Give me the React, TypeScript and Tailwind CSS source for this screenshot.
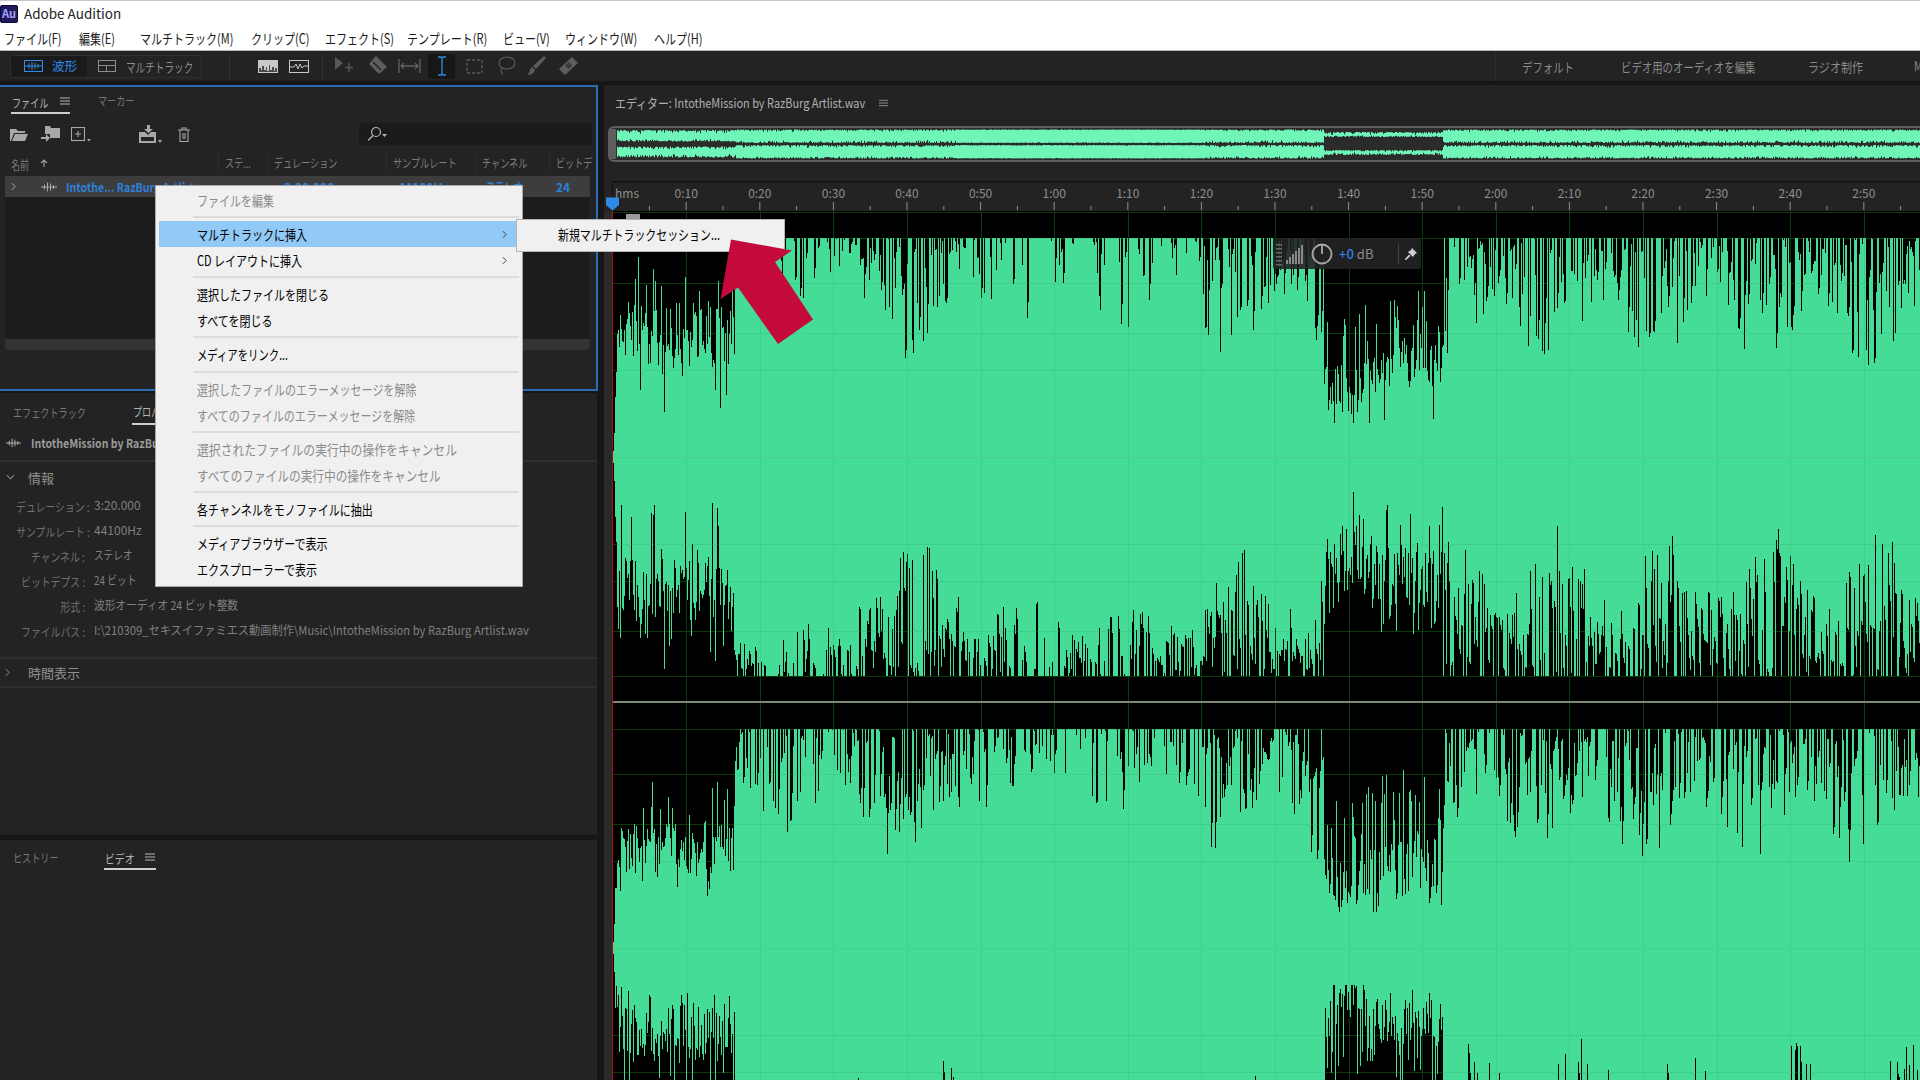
import type { ReactNode } from 'react';

// text in the reference is squeezed horizontally, so labels are narrowed with scale-x
const MENU_RAW = 'inline-block origin-left whitespace-nowrap leading-none text-[14px]';
const MENU_TEXT = `${MENU_RAW} scale-x-[.786]`;
const PANEL_RAW = 'inline-block origin-left whitespace-nowrap leading-none text-[12px]';
const PANEL_TEXT = `${PANEL_RAW} scale-x-[.76]`;
const BAR_RAW = 'inline-block origin-left whitespace-nowrap leading-none text-[13px]';
const BAR_TEXT = `${BAR_RAW} scale-x-[.8]`;

const CLIP = 219;
const CH1 = 457;
const CH2 = 948;
const SECOND = 7.36;
const ORIGIN = 612.6;

function rng(seed: number) {
  return () => {
    seed |= 0;
    seed = (seed + 0x6d2b79f5) | 0;
    let t = Math.imul(seed ^ (seed >>> 15), 1 | seed);
    t = (t + Math.imul(t ^ (t >>> 7), 61 | t)) ^ t;
    return ((t ^ (t >>> 14)) >>> 0) / 4294967296;
  };
}

// [from, to, spike density, spike depth]
type Seg = [number, number, number, number];
const EDGES: { seed: number; loud: Seg[]; a: number[]; q: number[] }[] = [
  {
    seed: 11,
    loud: [[735, 858, 0.2, 60], [858, 955, 0.55, 115], [955, 1205, 0.2, 85], [1205, 1324, 0.55, 112], [1443, 1921, 0.5, 125]],
    a: [17, 65, 130, 178],
    q: [50, 105, 150, 185],
  },
  {
    seed: 23,
    loud: [[735, 858, 0.4, 50], [858, 960, 0.7, 130], [960, 1205, 0.45, 78], [1205, 1324, 0.75, 125], [1443, 1921, 0.68, 145]],
    a: [6, 55, 122, 180],
    q: [38, 70, 130, 184],
  },
  {
    seed: 37,
    loud: [[735, 858, 0.42, 100], [858, 960, 0.65, 132], [960, 1205, 0.34, 84], [1205, 1324, 0.65, 125], [1443, 1921, 0.55, 130]],
    a: [38, 94, 144, 174],
    q: [40, 110, 160, 183],
  },
  {
    seed: 53,
    loud: [[735, 858, 0.2, 72], [858, 960, 0.6, 112], [960, 1205, 0.2, 72], [1205, 1324, 0.55, 112], [1443, 1921, 0.45, 125]],
    a: [60, 110, 170, 182],
    q: [60, 120, 170, 182],
  },
];

function edgeDepths(edge: (typeof EDGES)[number]) {
  const r = rng(edge.seed);
  const out: number[] = [];
  let carry = 0;
  for (let x = 613; x < 1920; x++) {
    const inA = x < 735;
    const inQ = x >= 1324 && x < 1443;
    if (inA || inQ) {
      const [tip, lo, hi, black] = inA ? edge.a : edge.q;
      const p = r();
      let d = lo + r() * (hi - lo);
      if (p < (inQ ? 0.2 : 0.12)) d = tip + r() * (lo - tip);
      else if (p > 0.93) d = hi + r() * (black - hi);
      if (inQ) d += 28 * Math.exp(-(((x - 1349) / 22) ** 2));
      out.push(Math.min(d, black));
      continue;
    }
    const seg = edge.loud.find((s) => x >= s[0] && x < s[1]);
    if (!seg) {
      out.push(0);
      continue;
    }
    const swell = 0.75 + 0.25 * Math.sin(x / 17 + edge.seed);
    if (carry > 0 && r() < 0.3) {
      out.push(carry * (0.7 + r() * 0.3));
      carry = 0;
    } else if (r() < seg[2]) {
      const d = 6 + Math.pow(r(), 1.1) * seg[3] * swell;
      out.push(d);
      carry = d;
    } else {
      out.push(r() < 0.08 ? r() * 5 : 0);
      carry = 0;
    }
  }
  return out;
}

function channelPath(center: number, topEdge: number, bottomEdge: number) {
  const top = edgeDepths(EDGES[topEdge]);
  const bottom = edgeDepths(EDGES[bottomEdge]);
  let d = '';
  top.forEach((t, i) => {
    const x = 613 + i;
    // the file fades in from nothing on its first pixels
    const fade = i < 4 ? [6, 24, 60, 85][i] : CLIP;
    const y1 = Math.round(Math.max(center - CLIP + t, center - fade));
    const y2 = Math.round(Math.min(center + CLIP - bottom[i], center + fade));
    d += `M${x + 0.5} ${y1}V${y2}`;
  });
  return d;
}

function overviewPath() {
  const r = rng(71);
  let d = '';
  for (let x = 617; x < 1920; x++) {
    const a = x < 736;
    const q = x >= 1324 && x < 1443;
    const n = () => r() * r();
    if (a) {
      d += `M${x + 0.5} ${(130 + n() * 4).toFixed(1)}V${(141.5 - n() * 3).toFixed(1)}`;
      d += `M${x + 0.5} ${(146.5 + n() * 3).toFixed(1)}V${(157.5 - n() * 4).toFixed(1)}`;
    } else if (q) {
      d += `M${x + 0.5} ${(132 + n() * 3).toFixed(1)}V${(137 - n() * 2).toFixed(1)}`;
      d += `M${x + 0.5} ${(150 + n() * 2).toFixed(1)}V${(155 - n() * 3).toFixed(1)}`;
    } else {
      const dense = x < 1205 && x > 955 ? 0.3 : 1;
      d += `M${x + 0.5} ${(129.5 + n() * 2.5 * dense).toFixed(1)}V${(143 - r() * r() * 3 * dense).toFixed(1)}`;
      d += `M${x + 0.5} ${(145 + r() * r() * 3 * dense).toFixed(1)}V${(158.5 - n() * 2.5 * dense).toFixed(1)}`;
    }
  }
  return d;
}

const WAVE1 = channelPath(CH1, 0, 1);
const WAVE2 = channelPath(CH2, 2, 3);
const OVERVIEW = overviewPath();
const MAJOR = Array.from({ length: 17 }, (_, i) => i + 1);
const GRID_Y = [CH1, CH2].flatMap((c) => [c - 219, c - 174, c - 124, c - 87, c, c + 87, c + 124, c + 174, c + 219]);

function fmt(n: number) {
  const s = n * 10;
  return `${Math.floor(s / 60)}:${String(s % 60).padStart(2, '0')}`;
}

function WaveGlyph({ className }: { className: string }) {
  return (
    <svg viewBox="0 0 16 10" className={className} fill="none" stroke="currentColor" strokeWidth="1">
      <path d="M0 5H16M3.5 2.5V7.5M6.5 0.5V9.5M9.5 1.5V8.5M12.5 3V7" />
    </svg>
  );
}

function Hamburger({ className }: { className: string }) {
  return (
    <svg viewBox="0 0 10 8" className={className} fill="none" stroke="currentColor" strokeWidth="1">
      <path d="M0 1H10M0 4H10M0 7H10" />
    </svg>
  );
}

function Sep({ tall }: { tall?: boolean }) {
  return (
    <div className={`${tall ? 'h-[9px]' : 'h-[8px]'} flex items-center ml-[37px] mr-[3px]`}>
      <div className="h-[2px] w-full bg-[#dcdcdc]" />
    </div>
  );
}

function Item({ label, off, sub, hot, text = MENU_TEXT }: { label: string; off?: boolean; sub?: boolean; hot?: boolean; text?: string }) {
  return (
    <div className={`h-[26px] flex items-center ml-[3px] mr-[6px] pl-[38px] ${hot ? 'bg-[#91c9f7]' : ''}`}>
      <span className={`${text} ${off ? 'text-[#8b8b8b]' : 'text-black'}`}>{label}</span>
      {sub && (
        <svg viewBox="0 0 6 10" className="w-[5px] h-[9px] ml-auto mr-[9px] text-[#444]" fill="none" stroke="currentColor" strokeWidth="1.2">
          <path d="M1 1L5 5L1 9" />
        </svg>
      )}
    </div>
  );
}

function ContextMenu() {
  return (
    <div className="absolute left-[155px] top-[185px] w-[368px] h-[402px] bg-[#f0f0f0] border border-[#a8a8a8] pt-[1px]">
      <Item label="ファイルを編集" off />
      <Sep />
      <Item label="マルチトラックに挿入" sub hot />
      <Item label="CD レイアウトに挿入" sub />
      <Sep />
      <Item label="選択したファイルを閉じる" />
      <Item label="すべてを閉じる" />
      <Sep />
      <Item label="メディアをリンク..." text={`${MENU_RAW} scale-x-[.74]`} />
      <Sep tall />
      <Item label="選択したファイルのエラーメッセージを解除" off />
      <Item label="すべてのファイルのエラーメッセージを解除" off />
      <Sep />
      <Item label="選択されたファイルの実行中の操作をキャンセル" off text={`${MENU_RAW} scale-x-[.844]`} />
      <Item label="すべてのファイルの実行中の操作をキャンセル" off text={`${MENU_RAW} scale-x-[.833]`} />
      <Sep />
      <Item label="各チャンネルをモノファイルに抽出" />
      <Sep />
      <Item label="メディアブラウザーで表示" />
      <Item label="エクスプローラーで表示" />
    </div>
  );
}

function TitleBar() {
  return (
    <div className="h-[26px] shrink-0 bg-white border-t border-[#c8c8c8] flex items-center">
      <div className="w-[18px] h-[18px] bg-[#1f1a5c] border border-[#0c0a33] rounded-[2px] flex items-center justify-center text-[11px] font-bold leading-none text-[#a7a4ff]">
        Au
      </div>
      <span className="ml-[6px] text-[13.5px] leading-none text-[#222]">Adobe Audition</span>
    </div>
  );
}

const MENUS: [string, string][] = [
  ['ファイル(F)', 'w-[75px]'],
  ['編集(E)', 'w-[61px]'],
  ['マルチトラック(M)', 'w-[111px]'],
  ['クリップ(C)', 'w-[74px]'],
  ['エフェクト(S)', 'w-[82px]'],
  ['テンプレート(R)', 'w-[96px]'],
  ['ビュー(V)', 'w-[62px]'],
  ['ウィンドウ(W)', 'w-[89px]'],
  ['ヘルプ(H)', 'w-[60px]'],
];

function MenuBar() {
  return (
    <div className="h-[25px] shrink-0 bg-white border-b border-[#b8b8b8] flex items-center pl-[4px] pb-[2px]">
      {MENUS.map(([label, w]) => (
        <div key={label} className={w}>
          <span className={`${MENU_TEXT} text-[#1a1a1a]`}>{label}</span>
        </div>
      ))}
    </div>
  );
}

function Toolbar() {
  return (
    <div className="h-[30px] shrink-0 overflow-hidden bg-[#232323] flex items-center pl-[10px] text-[#b5b5b5] [&>*]:shrink-0">
      <div className="w-[192px] h-[23px] flex rounded-[3px] border border-[#2f2f2f]">
        <div className="w-[76px] shrink-0 bg-[#1a1a1a] flex items-center pl-[13px] text-[#2f8ae8]">
          <svg viewBox="0 0 19 12" className="w-[19px] h-[12px]" fill="none" stroke="currentColor" strokeWidth="1">
            <rect x="0.5" y="0.5" width="18" height="11" />
            <path d="M1 6H18M5 3.5V8.5M8 2V10M11 3V9M14 4V8" />
          </svg>
          <span className="ml-[9px] text-[12.5px] leading-none whitespace-nowrap">波形</span>
        </div>
        <div className="flex-1 min-w-0 flex items-center pl-[11px] text-[#8c8c8c]">
          <svg viewBox="0 0 18 12" className="w-[18px] h-[12px] shrink-0" fill="#8c8c8c">
            <path d="M0 0H18V12H0ZM1 1V5H17V1ZM1 6V11H8V6ZM9 6V11H17V6Z" fillRule="evenodd" />
          </svg>
          <span className={`ml-[10px] ${BAR_RAW} scale-x-[.74]`}>マルチトラック</span>
        </div>
      </div>
      <div className="ml-[27px] w-px h-[26px] bg-[#333]" />
      <svg viewBox="0 0 20 13" className="ml-[28px] w-[20px] h-[13px]">
        <rect width="20" height="13" fill="#c8c8c8" />
        <path d="M1 12V8H3V10H4V6H6V10H8V7H9V11H11V5H12V10H14V7H16V11H17V8H19V12Z" fill="#4a4a4a" />
      </svg>
      <svg viewBox="0 0 20 13" className="ml-[11px] w-[20px] h-[13px]" fill="none" stroke="#c8c8c8" strokeWidth="1">
        <rect x="0.5" y="0.5" width="19" height="12" />
        <path d="M1 7H5L7 4L9 9L11 4L13 8L15 6H19" />
      </svg>
      <div className="ml-[13px] w-px h-[26px] bg-[#333]" />
      <svg viewBox="0 0 20 18" className="ml-[12px] w-[20px] h-[18px]" fill="#585858">
        <path d="M0 0L8 6L0 13Z" />
        <path d="M14 6V15M10 10.5H18" stroke="#585858" strokeWidth="1.4" />
      </svg>
      <svg viewBox="0 0 21 20" className="ml-[13px] w-[21px] h-[20px]">
        <path d="M8 0L19 11L11 18L1 8Z" fill="#5e5e5e" />
        <path d="M5 6L13 14" stroke="#232323" strokeWidth="1.5" />
      </svg>
      <svg viewBox="0 0 23 14" className="ml-[9px] w-[23px] h-[14px]" fill="none" stroke="#626262" strokeWidth="1.3">
        <path d="M1 0V14M22 0V14M3 7H20M6 4L3 7L6 10M17 4L20 7L17 10" />
      </svg>
      <div className="ml-[7px] w-[27px] h-[25px] bg-[#171717] rounded-[2px] flex items-center justify-center">
        <svg viewBox="0 0 10 20" className="w-[10px] h-[20px]" fill="none" stroke="#2f8ae8" strokeWidth="1.3">
          <path d="M1 1H4L5 2L6 1H9M5 2V18M1 19H4L5 18L6 19H9" />
        </svg>
      </div>
      <svg viewBox="0 0 17 15" className="ml-[11px] w-[17px] h-[15px]" fill="none" stroke="#5a5a5a" strokeWidth="1.3" strokeDasharray="3 2">
        <rect x="1" y="1" width="15" height="13" />
      </svg>
      <svg viewBox="0 0 20 20" className="ml-[13px] w-[20px] h-[20px]" fill="none" stroke="#5a5a5a" strokeWidth="1.2">
        <ellipse cx="11" cy="7" rx="8" ry="6" />
        <path d="M6 12C4 14 5 16 7 19" />
      </svg>
      <svg viewBox="0 0 19 20" className="ml-[11px] w-[19px] h-[20px]" fill="#5c5c5c">
        <path d="M17 0L19 2L9 13L6 10Z" />
        <path d="M5 11L8 14C7 18 3 19 0 19C3 17 2 13 5 11Z" />
      </svg>
      <svg viewBox="0 0 21 20" className="ml-[12px] w-[21px] h-[20px]">
        <path d="M14 1L20 7L7 19L1 13Z" fill="#5e5e5e" />
        <rect x="8" y="7" width="5" height="5" transform="rotate(-45 10.5 9.5)" fill="#3a3a3a" />
      </svg>
      <div className="ml-[916px] border-l border-[#2e2e2e] h-full flex items-center pl-[26px] pb-[2px] text-[#8a8a8a]">
        <div className="w-[99px]"><span className={BAR_TEXT}>デフォルト</span></div>
        <div className="w-[187px]"><span className={BAR_TEXT}>ビデオ用のオーディオを編集</span></div>
        <div className="w-[106px]"><span className={`${BAR_RAW} scale-x-[.85]`}>ラジオ制作</span></div>
        <span className={BAR_TEXT}>M</span>
      </div>
    </div>
  );
}

function Col({ className, children, first }: { className: string; children?: ReactNode; first?: boolean }) {
  return (
    <div className={`${className} h-full flex items-center ${first ? '' : 'border-l border-[#2c2c2c] pl-[6px]'}`}>{children}</div>
  );
}

function FilesPanel() {
  return (
    <div className="h-[306px] shrink-0 bg-[#232323] border-y-2 border-r-2 border-[#2a6db5] flex flex-col">
      <div className="h-[27px] shrink-0 flex items-end pl-[11px]">
        <div className="w-[59px] h-[27px] flex items-center border-b-2 border-[#cfcfcf] pl-[1px] pt-[3px] text-[#b5b5b5]">
          <div className="w-[48px]"><span className={PANEL_TEXT}>ファイル</span></div>
          <Hamburger className="w-[10px] h-[8px]" />
        </div>
        <div className="ml-[28px] h-[27px] flex items-center pt-[1px] text-[#777]">
          <span className={PANEL_TEXT}>マーカー</span>
        </div>
      </div>
      <div className="h-[34px] mt-[3px] shrink-0 flex items-center pl-[10px] text-[#a8a8a8]">
        <svg viewBox="0 0 18 13" className="w-[18px] h-[13px]" fill="currentColor">
          <path d="M0 1H6L8 3H15V5H4L1 13H0ZM5 6H18L15 13H2Z" />
        </svg>
        <svg viewBox="0 0 19 16" className="ml-[13px] w-[19px] h-[16px]" fill="currentColor">
          <path d="M4 0H9L10 2H19V12H9V8H4Z" />
          <path d="M0 11H5V8L9 12L5 16V13H0Z" />
        </svg>
        <svg viewBox="0 0 21 15" className="ml-[11px] w-[21px] h-[15px]" fill="none" stroke="currentColor" strokeWidth="1.1">
          <rect x="0.5" y="0.5" width="13" height="13" />
          <path d="M7 4V10M4 7H10" />
          <path d="M16 12H20L18 14.5Z" fill="currentColor" stroke="none" />
        </svg>
        <svg viewBox="0 0 23 19" className="ml-[47px] w-[23px] h-[19px]" fill="currentColor">
          <path d="M8 0H11V4H14L9.5 8L5 4H8Z" />
          <path d="M0 7H6L9 10L12 7H17V18H0ZM2 12V16H15V12Z" fillRule="evenodd" />
          <path d="M19 15H23L21 18Z" />
        </svg>
        <svg viewBox="0 0 12 15" className="ml-[16px] w-[12px] h-[15px]" fill="none" stroke="currentColor" strokeWidth="1.1">
          <path d="M0 3H12M4 3V1H8V3M2 3V14.5H10V3M5 6V12M7 6V12" />
        </svg>
        <div className="ml-[169px] w-[233px] h-[22px] bg-[#1b1b1b] rounded-[3px] flex items-center pl-[8px]">
          <svg viewBox="0 0 21 16" className="w-[21px] h-[16px]" fill="none" stroke="#b5b5b5" strokeWidth="1.2">
            <circle cx="9" cy="6" r="4.5" />
            <path d="M6 9.5L1 14.5" />
            <path d="M15 8H20L17.5 11Z" fill="#b5b5b5" stroke="none" />
          </svg>
        </div>
      </div>
      <div className="h-[21px] mt-[1px] shrink-0 flex ml-[5px] text-[#7c7c7c]">
        <Col className="w-[213px] pl-[6px]" first>
          <div className="w-[29px]"><span className={PANEL_TEXT}>名前</span></div>
          <svg viewBox="0 0 8 8" className="w-[8px] h-[8px]" fill="none" stroke="#999" strokeWidth="1.2"><path d="M4 8V1M1 4L4 1L7 4" /></svg>
        </Col>
        <Col className="w-[49px]"><span className={PANEL_TEXT}>ステ...</span></Col>
        <Col className="w-[119px]"><span className={PANEL_TEXT}>デュレーション</span></Col>
        <Col className="w-[89px]"><span className={PANEL_TEXT}>サンプルレート</span></Col>
        <Col className="w-[74px]"><span className={PANEL_TEXT}>チャンネル</span></Col>
        <Col className="w-[41px]"><span className={PANEL_TEXT}>ビットデ</span></Col>
      </div>
      <div className="mt-[3px] mx-[5px] w-[585px] h-[174px] shrink-0 bg-[#1c1c1c] rounded-b-[4px] flex flex-col">
        <div className="h-[21px] bg-[#3d3d3d] flex text-[#2f80d8] font-bold">
          <div className="w-[213px] flex items-center pl-[6px]">
            <svg viewBox="0 0 6 10" className="w-[5px] h-[9px] text-[#aaa]" fill="none" stroke="currentColor" strokeWidth="1.2"><path d="M1 1L5 5L1 9" /></svg>
            <WaveGlyph className="ml-[25px] w-[16px] h-[10px] text-[#aaa]" />
            <span className={`ml-[9px] ${PANEL_RAW} scale-x-[.88]`}>Intothe... RazBurg Artlist</span>
          </div>
          <div className="w-[49px]" />
          <div className="w-[119px] pl-[17px] flex items-center"><span className={PANEL_RAW}>3:20.000</span></div>
          <div className="w-[89px] pl-[12px] flex items-center"><span className={PANEL_RAW}>44100Hz</span></div>
          <div className="w-[74px] pl-[11px] flex items-center"><span className={PANEL_TEXT}>ステレオ</span></div>
          <div className="pl-[7px] flex items-center"><span className={PANEL_RAW}>24</span></div>
        </div>
        <div className="mt-auto h-[11px] bg-[#333] rounded-b-[4px]" />
      </div>
    </div>
  );
}

const INFO: [string, string, string][] = [
  ['デュレーション :', '3:20.000', 'scale-x-[1]'],
  ['サンプルレート :', '44100Hz', 'scale-x-[1]'],
  ['チャンネル :', 'ステレオ', 'scale-x-[.8]'],
  ['ビットデプス :', '24 ビット', 'scale-x-[.82]'],
  ['形式 :', '波形オーディオ 24 ビット整数', 'scale-x-[.89]'],
  ['ファイルパス :', 'I:\\210309_セキスイファミエス動画制作\\Music\\IntotheMission by RazBurg Artlist.wav', 'scale-x-[.935]'],
];

function PropsPanel() {
  return (
    <div className="h-[442px] shrink-0 mt-[2px] bg-[#232323] flex flex-col w-[597px]">
      <div className="h-[32px] shrink-0 flex pl-[13px]">
        <div className="w-[119px] flex items-center pt-[7px] text-[#777]"><span className={PANEL_TEXT}>エフェクトラック</span></div>
        <div className="w-[60px] flex items-center pt-[7px] pl-[1px] border-b-2 border-[#cfcfcf] text-[#b5b5b5]"><span className={PANEL_TEXT}>プロパティ</span></div>
      </div>
      <div className="h-[37px] shrink-0 flex items-center pl-[6px] pt-[1px] border-b-2 border-[#2e2e2e] text-[#9a9a9a]">
        <WaveGlyph className="w-[15px] h-[10px] text-[#bbb]" />
        <span className={`ml-[10px] ${PANEL_RAW} font-bold scale-x-[.88]`}>IntotheMission by RazBurg Artlist.wav</span>
      </div>
      <div className="h-[30px] shrink-0 flex items-center pl-[6px] text-[#8f8f8f]">
        <svg viewBox="0 0 10 6" className="w-[9px] h-[6px]" fill="none" stroke="currentColor" strokeWidth="1.2"><path d="M1 1L5 5L9 1" /></svg>
        <span className="ml-[13px] text-[13px] leading-none whitespace-nowrap">情報</span>
      </div>
      <div className="flex flex-col">
        {INFO.map(([k, v, s]) => (
          <div key={k} className="h-[25px] flex items-center">
            <div className="w-[85px] text-right text-[#707070]">
              <span className={`${PANEL_RAW} scale-x-[.82] origin-right`}>{k}</span>
            </div>
            <span className={`ml-[9px] ${PANEL_RAW} ${s} text-[#808080]`}>{v}</span>
          </div>
        ))}
      </div>
      <div className="mt-[15px] h-[31px] shrink-0 flex items-center pl-[5px] border-y-2 border-[#2e2e2e] text-[#8f8f8f]">
        <svg viewBox="0 0 6 10" className="w-[5px] h-[9px]" fill="none" stroke="currentColor" strokeWidth="1.2"><path d="M1 1L5 5L1 9" /></svg>
        <span className="ml-[18px] text-[13px] leading-none whitespace-nowrap">時間表示</span>
      </div>
    </div>
  );
}

function VideoPanel() {
  return (
    <div className="flex-1 mt-[5px] bg-[#232323] w-[597px]">
      <div className="h-[30px] flex pl-[13px]">
        <div className="w-[91px] flex items-center pt-[5px] text-[#777]"><span className={PANEL_TEXT}>ヒストリー</span></div>
        <div className="w-[52px] flex items-center pt-[5px] border-b-2 border-[#cfcfcf] text-[#b5b5b5] pl-[1px]">
          <div className="w-[40px]"><span className={`${PANEL_RAW} scale-x-[.82]`}>ビデオ</span></div>
          <Hamburger className="w-[10px] h-[8px]" />
        </div>
      </div>
    </div>
  );
}

function Editor() {
  return (
    <div className="flex-1 ml-[6px] bg-[#232323] flex flex-col min-w-0">
      <div className="h-[36px] shrink-0 flex items-center pl-[11px] text-[#b0b0b0]">
        <div className="w-[264px]"><span className={`${BAR_RAW} scale-x-[.84] -translate-y-[2px]`}>エディター: IntotheMission by RazBurg Artlist.wav</span></div>
        <Hamburger className="w-[9px] h-[8px] text-[#999]" />
      </div>
      <svg viewBox="604 126 1316 36" className="mt-[5px] w-[1316px] h-[36px] shrink-0">
        <rect x="609" y="127" width="1320" height="34" rx="5" fill="#2b2b2b" stroke="#5e5e5e" strokeWidth="2" />
        <path d="M613 129V159" stroke="#5e5e5e" strokeWidth="6" />
        <path d={OVERVIEW} stroke="#6ff5b8" strokeWidth="1" fill="none" />
      </svg>
      <div className="h-[19px] shrink-0" />
      <svg viewBox="604 181 1316 30" className="w-[1316px] h-[30px] shrink-0">
        <rect x="604" y="181" width="8" height="30" fill="#232323" />
        <rect x="612" y="181" width="1308" height="1.5" fill="#111" />
        <rect x="612" y="181" width="1" height="30" fill="#111" />
        <text x="615" y="198" fontSize="12" fill="#8e8e8e">hms</text>
        {MAJOR.map((i) => {
          const x = ORIGIN + i * 10 * SECOND;
          return (
            <g key={i}>
              <text x={x} y="198" fontSize="12" fill="#8e8e8e" textAnchor="middle">{fmt(i)}</text>
              <path d={`M${x} 202V210M${x - 5 * SECOND} 206V210`} stroke="#8e8e8e" strokeWidth="1" />
            </g>
          );
        })}
        <path d={`M${ORIGIN + 175 * SECOND} 206V210`} stroke="#8e8e8e" strokeWidth="1" />
      </svg>
      <div className="flex-1 flex min-h-0">
        <div className="w-[8px] shrink-0 bg-[#2a2a2a]" />
        <div className="w-px shrink-0 bg-[#b00d0d]" />
        <svg viewBox="613 211 1307 869" className="w-[1307px] h-[869px] bg-black shrink-0">
          <g stroke="#0c3a0c" strokeWidth="1" shapeRendering="crispEdges">
            <path d="M613 212H1920" />
            {GRID_Y.map((y) => <path key={y} d={`M613 ${y}H1920`} />)}
            {MAJOR.map((i) => <path key={i} d={`M${Math.round(ORIGIN + i * 10 * SECOND)} 211V1080`} />)}
          </g>
          <path d={WAVE1} stroke="#45dc98" strokeWidth="1" shapeRendering="crispEdges" fill="none" />
          <path d={WAVE2} stroke="#45dc98" strokeWidth="1" shapeRendering="crispEdges" fill="none" />
          <g stroke="#0c3a0c" strokeWidth="1" opacity="0.08" shapeRendering="crispEdges">
            {GRID_Y.map((y) => <path key={y} d={`M613 ${y}H1920`} />)}
            {MAJOR.map((i) => <path key={i} d={`M${Math.round(ORIGIN + i * 10 * SECOND)} 211V1080`} />)}
          </g>
          <path d={`M613 ${CH1}H1920M613 ${CH2}H1920`} stroke="#7fe6b2" strokeWidth="1" opacity="0.2" />
          <rect x="613" y="701" width="1307" height="2" fill="#7d8a78" />
          <rect x="626" y="214" width="14" height="6" fill="#9a9a9a" />
        </svg>
      </div>
    </div>
  );
}

function Hud() {
  return (
    <div className="absolute left-[1273px] top-[238px] w-[148px] h-[31px] bg-[#232323]/90 rounded-[2px] flex items-center">
      <svg viewBox="0 0 8 24" className="ml-[2px] w-[8px] h-[24px]" fill="#666">
        {[2, 6, 10, 14, 18, 22].map((y) => <rect key={y} x="1" y={y} width="6" height="1.5" />)}
      </svg>
      <svg viewBox="0 0 20 20" className="ml-[2px] w-[20px] h-[20px]" fill="#8a8a8a">
        {[1, 4, 7, 10, 13, 16].map((x, i) => <rect key={x} x={x} y={16 - i * 3} width="2" height={4 + i * 3} />)}
      </svg>
      <svg viewBox="0 0 22 22" className="ml-[6px] w-[22px] h-[22px]" fill="none" stroke="#a8a8a8" strokeWidth="1.8">
        <circle cx="11" cy="11" r="9.5" />
        <path d="M11 2V11" />
      </svg>
      <span className="ml-[6px] text-[13px] leading-none text-[#2f7fe8] font-medium whitespace-nowrap">+0</span>
      <span className="ml-[3px] text-[13px] leading-none text-[#8a8a8a] whitespace-nowrap">dB</span>
      <div className="ml-[25px] w-px h-[20px] bg-[#444]" />
      <svg viewBox="0 0 12 12" className="ml-[6px] w-[12px] h-[12px]" fill="#cfcfcf">
        <path d="M7 0L12 5L10 6L8 9L3 4L6 2Z" />
        <path d="M4 6.5L5.5 8L1 12H0V11Z" />
      </svg>
    </div>
  );
}

export default function App() {
  return (
    <div className="relative w-[1920px] h-[1080px] overflow-hidden flex flex-col bg-[#161616] [font-family:'Noto_Sans_CJK_JP','Noto_Sans',sans-serif]">
      <TitleBar />
      <MenuBar />
      <Toolbar />
      <div className="h-[4px] shrink-0" />
      <div className="flex-1 flex min-h-0">
        <div className="w-[598px] shrink-0 flex flex-col">
          <FilesPanel />
          <PropsPanel />
          <VideoPanel />
        </div>
        <Editor />
      </div>

      {/* overlays */}
      <svg viewBox="0 0 14 14" className="absolute left-[606px] top-[197px] w-[13px] h-[14px]" fill="#2f8ae8">
        <path d="M0 0H14V8L7 14L0 8Z" />
      </svg>
      <Hud />
      <ContextMenu />
      <div className="absolute left-[516px] top-[219px] w-[269px] h-[33px] bg-[#f0f0f0] border border-[#b5b5b5] flex items-center pl-[41px] pb-[3px]">
        <span className={`${MENU_RAW} scale-x-[.78] text-black`}>新規マルチトラックセッション...</span>
      </div>
      <svg viewBox="715 235 105 115" className="absolute left-[715px] top-[235px] w-[105px] h-[115px]" fill="#c40a3a">
        <polygon points="731,239.5 792,250.5 775,262 813,319.5 778,344 738,287.5 720.5,299" />
      </svg>
    </div>
  );
}
